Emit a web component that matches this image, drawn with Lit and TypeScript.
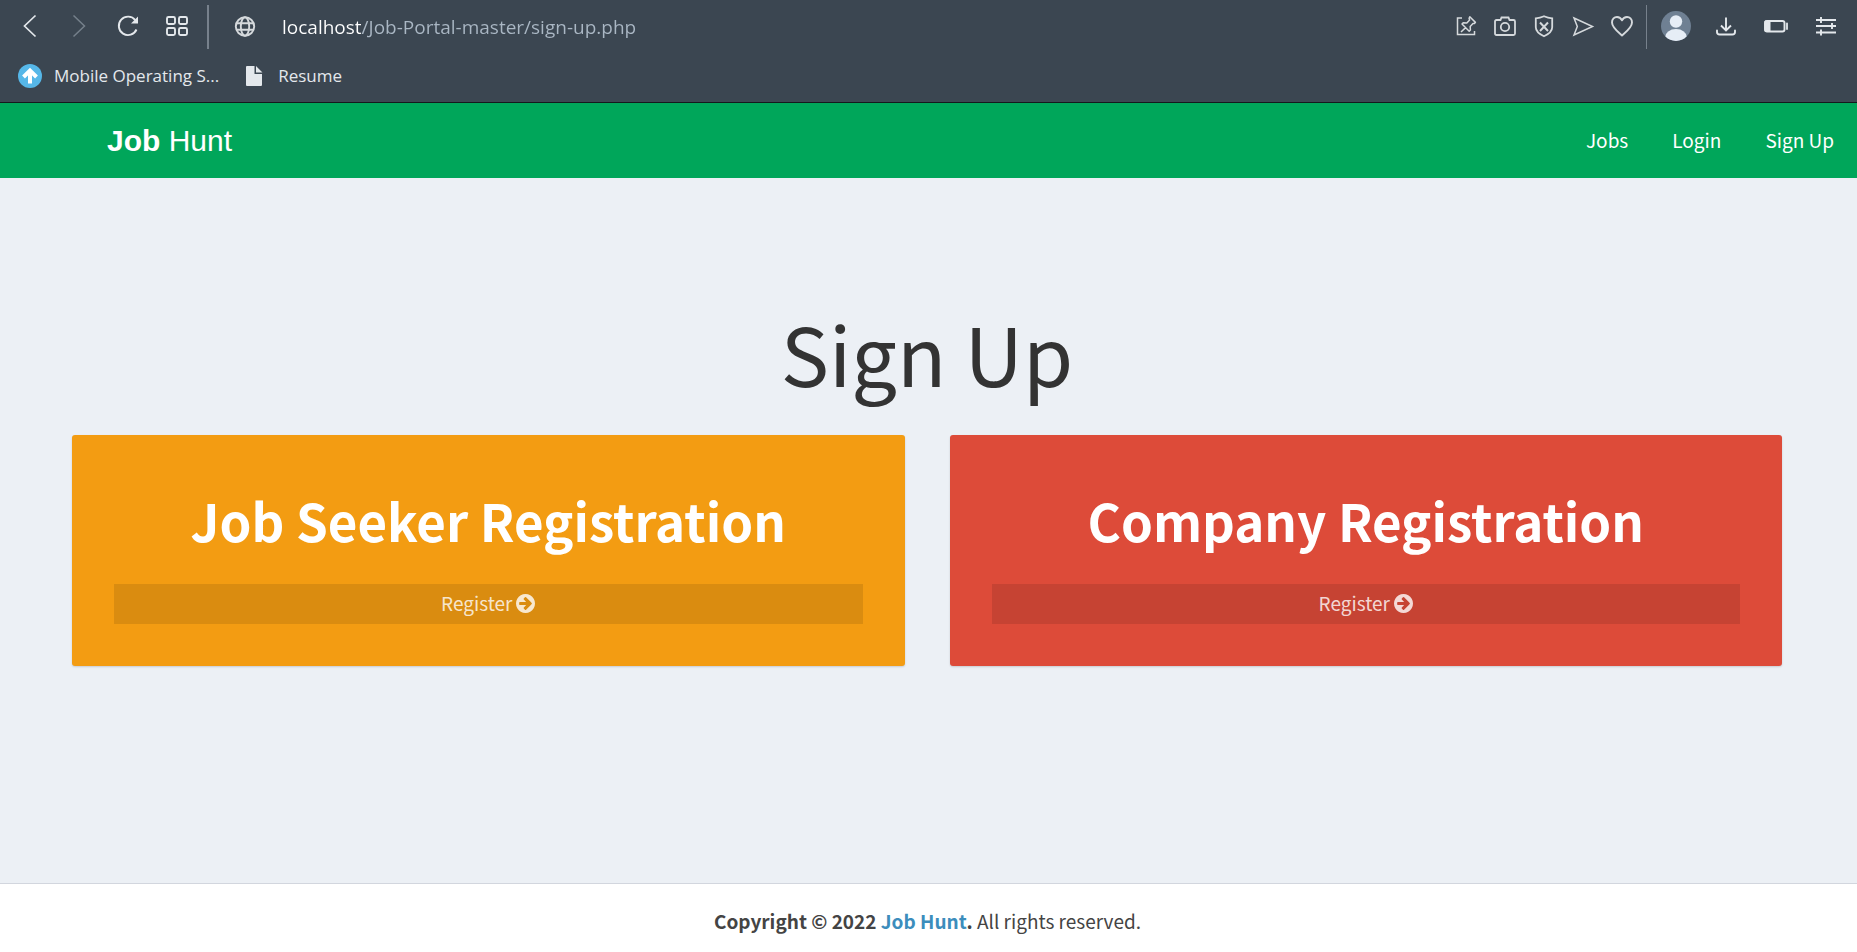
import { LitElement, html, css, svg } from "lit";
import { customElement, property } from "lit/decorators.js";

const icons: Record<string, unknown> = {
  back: svg`<path d="M17.500 1.500 6.500 12l11 10.500" stroke-width="1.700"/>`,
  forward: svg`<path d="M6.500 1.500 17.500 12l-11 10.500" stroke-width="1.500"/>`,
  reload: svg`<path d="M19.300 6.200A9.200 9.200 0 1 0 20.500 15.500" stroke-width="1.900"/><path d="M22 2.500v7h-7z" fill="currentColor" stroke="none"/>`,
  tiles: svg`<g stroke-width="1.900"><rect x="2" y="3" width="8" height="7" rx="1.500"/><rect x="14" y="3" width="8" height="7" rx="1.500"/><rect x="2" y="14" width="8" height="7" rx="1.500"/><rect x="14" y="14" width="8" height="7" rx="1.500"/></g>`,
  globe: svg`<g stroke-width="1.900"><circle cx="12" cy="12.500" r="9.200"/><ellipse cx="12" cy="12.500" rx="4.200" ry="9.200"/><path d="M3.300 9.200h17.400M3.300 15.800h17.400"/></g>`,
  pin: svg`<path d="M8 4H3.500v16.500H20.500V17" stroke-width="1.500"/><path d="m15.800 2.800 5.600 5.600-1.200 1.200-1.200-.200-2.800 3 .200 3.600-1.200 1.200-7.200-7.200 1.200-1.200 3.600.200 2.800-3-.500-1.700zM11.600 13.600 7 18" stroke-width="1.500" stroke-linejoin="round"/>`,
  camera: svg`<path d="M3.500 6H7.500L8.500 3.500h7L16.500 6h4q1.500 0 1.500 1.500v12q0 1.500-1.500 1.500h-17Q2 21 2 19.500v-12Q2 6 3.500 6z" stroke-width="1.800"/><circle cx="12" cy="13" r="4.200" stroke-width="1.800"/>`,
  shield: svg`<path d="M12 2.300c2.500 1.200 5.200 1.900 8.200 2v9c0 4-3.500 6.800-8.200 9-4.700-2.200-8.200-5-8.200-9v-9c3-.100 5.700-.800 8.200-2z" stroke-width="1.800"/><path d="m8 8.500 8 8.500m0-8.500-8 8.500" stroke-width="2"/>`,
  send: svg`<path d="M3 4 21.500 12.500 3 21l3.300-8.500z" stroke-width="1.500"/>`,
  heart: svg`<path d="M12 21.500C8 18 2 13.500 2 8.500 2 5 4.300 3 7 3c2.300 0 4 1.300 5 3.300C13 4.300 14.700 3 17 3c2.700 0 5 2 5 5.500 0 5-6 9.500-10 13z" stroke-width="1.900" stroke-linejoin="round"/>`,
  download: svg`<path d="M12 3.500V16M7 11.500l5 5 5-5" stroke-width="1.900"/><path d="M3 16.500v1.500Q3 20.500 5.700 20.500h12.600q2.700 0 2.700-2.500v-1.500" stroke-width="1.900" stroke-linecap="round"/>`,
  battery: svg`<rect x="1" y="7" width="19.500" height="10.500" rx="2" stroke-width="1.900"/><path d="M1 7h5v10.500H1z" fill="currentColor"/><path d="M23 9.500v5.500" stroke-width="1.800" stroke-linecap="round"/>`,
  sliders: svg`<path d="M2 6h20M2 12h20M2 18.500h20" stroke-width="1.900"/><path d="M7 3v6M18 9v6M7 15.500v6" stroke-width="1.900"/>`,
  upload: svg`<circle cx="12" cy="12" r="12" fill="#56b7e8" stroke="none"/><path d="M12 19.500V7M5.500 13l6.500-6.500 6.500 6.500" stroke="#fff" stroke-width="4"/>`,
  file: svg`<path d="M5 2h7.500v8H20v11q0 1-1 1H5q-1 0-1-1V3q0-1 1-1zM14 2l6.500 6.500H14z" fill="currentColor" stroke="none"/>`,
};

@customElement("ui-icon")
export class UiIcon extends LitElement {
  @property() name = "";

  static styles = css`
    :host { display: inline-flex; }
    .glyph { width: 24px; height: 24px; fill: none; stroke: currentColor; }
  `;

  render() {
    return html`<svg class="glyph" viewBox="0 0 24 24" aria-hidden="true">${icons[this.name]}</svg>`;
  }
}

@customElement("browser-bar")
export class BrowserBar extends LitElement {
  static styles = css`
    :host {
      display: block;
      background: #3b4651;
      color: #e4e8ec;
      border-bottom: 1px solid #14181c;
      font-family: "Open Sans", "Noto Sans", sans-serif;
    }
    .toolbar { display: flex; align-items: center; height: 52px; padding: 0 6px 0 5px; }
    .tool {
      display: inline-flex;
      align-items: center;
      justify-content: center;
      flex: none;
      width: 50px;
      height: 44px;
      padding: 0;
      border: 0;
      background: none;
      color: #e4e8ec;
    }
    .tool:disabled { color: #75808b; }
    .step { width: 49px; }
    .site { width: 39px; color: #d5d9dc; }
    .divider { flex: none; width: 2px; height: 44px; background: #77818c; margin: 2px 16px 0 6px; }
    .thin { width: 1px; margin: 2px 4px 0 5px; }
    .address {
      flex: 1;
      min-width: 0;
      margin-left: 18px;
      padding: 2px 0 0;
      border: 0;
      outline: 0;
      font: inherit;
      font-size: 19px;
      line-height: 28px;
      color: #fff;
      background: linear-gradient(90deg, #fff 79px, #aab7c4 79px);
      background-clip: text;
      -webkit-background-clip: text;
      -webkit-text-fill-color: transparent;
    }
    .avatar { width: 30px; height: 30px; }
    .bookmarks { display: flex; align-items: center; gap: 23px; height: 48px; padding: 0 18px 2px; }
    .bookmark {
      display: inline-flex;
      align-items: center;
      gap: 12px;
      font-size: 17px;
      line-height: 24px;
      color: #e4e8ec;
      text-decoration: none;
    }
  `;

  private tool(name: string, label: string, extra = "") {
    return html`<button class="tool ${extra}" aria-label=${label}><ui-icon name=${name}></ui-icon></button>`;
  }

  render() {
    return html`
      <div class="toolbar">
        ${this.tool("back", "Back", "step")}
        <button class="tool step" aria-label="Forward" disabled><ui-icon name="forward"></ui-icon></button>
        ${this.tool("reload", "Reload", "step")}
        ${this.tool("tiles", "Speed dial", "step")}
        <span class="divider"></span>
        ${this.tool("globe", "Site information", "site")}
        <input class="address" aria-label="Address" spellcheck="false" value="localhost/Job-Portal-master/sign-up.php" />
        ${this.tool("pin", "Pinboard", "site")}
        ${this.tool("camera", "Snapshot", "site")}
        ${this.tool("shield", "Blocker", "site")}
        ${this.tool("send", "Send", "site")}
        ${this.tool("heart", "Bookmark", "site")}
        <span class="divider thin"></span>
        <button class="tool" aria-label="Profile">
          <svg class="avatar" viewBox="0 0 30 30" aria-hidden="true">
            <defs><clipPath id="disc"><circle cx="15" cy="15" r="15" /></clipPath></defs>
            <g clip-path="url(#disc)">
              <rect width="30" height="30" fill="#6f8093" />
              <circle cx="15" cy="10.500" r="6.200" fill="#e6edf6" />
              <ellipse cx="15" cy="26.500" rx="11" ry="8.500" fill="#e6edf6" />
            </g>
          </svg>
        </button>
        ${this.tool("download", "Downloads")}
        ${this.tool("battery", "Battery saver")}
        ${this.tool("sliders", "Easy setup")}
      </div>
      <nav class="bookmarks" aria-label="Bookmarks">
        <a class="bookmark" href="#"><ui-icon name="upload"></ui-icon>Mobile Operating S...</a>
        <a class="bookmark" href="#"><ui-icon name="file"></ui-icon>Resume</a>
      </nav>
    `;
  }
}

@customElement("register-card")
export class RegisterCard extends LitElement {
  @property() heading = "";
  @property({ reflect: true }) tone = "yellow";

  static styles = css`
    :host {
      display: block;
      padding: 57px 42px 42px;
      border-radius: 3px;
      color: #fff;
      text-align: center;
      box-shadow: 0 1px 2px rgba(0, 0, 0, 0.15);
    }
    :host([tone="yellow"]) { background: #f39c12; }
    :host([tone="red"]) { background: #dd4b39; }
    .heading { margin: 0 0 36px; font-size: 51px; line-height: 56px; font-weight: 700; }
    .register {
      display: flex;
      align-items: center;
      justify-content: center;
      gap: 4px;
      padding: 4px 0 6px;
      background: rgba(0, 0, 0, 0.1);
      color: rgba(255, 255, 255, 0.8);
      font-size: 19px;
      line-height: 30px;
      text-decoration: none;
    }
    .arrow { width: 19px; height: 19px; fill: currentColor; }
  `;

  render() {
    return html`
      <h2 class="heading">${this.heading}</h2>
      <a class="register" href="#">Register
        <svg class="arrow" viewBox="128 128 1536 1536" aria-hidden="true">
          <path d="M1413 896q0-27-18-45l-91-91-362-362q-18-18-45-18t-45 18l-91 91q-18 18-18 45t18 45l189 189h-502q-26 0-45 19t-19 45v128q0 26 19 45t45 19h502l-189 189q-19 19-19 45t19 45l91 91q18 18 45 18t45-18l362-362 91-91q18-18 18-45zm251 0q0 209-103 385.500t-279.500 279.500-385.500 103-385.500-103-279.500-279.500-103-385.500 103-385.500 279.500-279.500 385.500-103 385.500 103 279.500 279.500 103 385.500z" />
        </svg>
      </a>
    `;
  }
}

@customElement("app-root")
export class AppRoot extends LitElement {
  static styles = css`
    :host {
      display: flex;
      flex-direction: column;
      min-height: 100vh;
      background: #ecf0f5;
      color: #333;
      font-family: "Noto Sans CJK SC", sans-serif;
      font-size: 19px;
      line-height: 30px;
    }
    .header {
      display: flex;
      align-items: center;
      justify-content: space-between;
      height: 75px;
      padding-left: 107px;
      background: #00a65a;
      color: #fff;
    }
    .logo { font-family: "Liberation Sans", Arial, sans-serif; font-size: 30px; color: #fff; text-decoration: none; }
    .links { display: flex; gap: 44px; padding: 0 23px 2px; }
    .link { color: #fff; text-decoration: none; }
    .content { flex: 1; padding: 129px 75px 60px 72px; }
    .title { margin: 0 0 38px; font-size: 81px; line-height: 90px; font-weight: 400; text-align: center; }
    .cards { display: grid; grid-template-columns: 1fr 1fr; gap: 45px; }
    .footer {
      padding: 22px 24px 16px 22px;
      border-top: 1px solid #d2d6de;
      background: #fff;
      color: #444;
      text-align: center;
    }
    .brand { color: #3c8dbc; text-decoration: none; }
  `;

  render() {
    return html`
      <browser-bar></browser-bar>
      <header class="header">
        <a class="logo" href="#"><b>Job</b> Hunt</a>
        <nav class="links" aria-label="Main">
          <a class="link" href="#">Jobs</a>
          <a class="link" href="#">Login</a>
          <a class="link" href="#">Sign Up</a>
        </nav>
      </header>
      <main class="content">
        <h1 class="title">Sign Up</h1>
        <div class="cards">
          <register-card tone="yellow" heading="Job Seeker Registration"></register-card>
          <register-card tone="red" heading="Company Registration"></register-card>
        </div>
      </main>
      <footer class="footer">
        <strong>Copyright © 2022 <a class="brand" href="#">Job Hunt</a>.</strong> All rights reserved.
      </footer>
    `;
  }
}
